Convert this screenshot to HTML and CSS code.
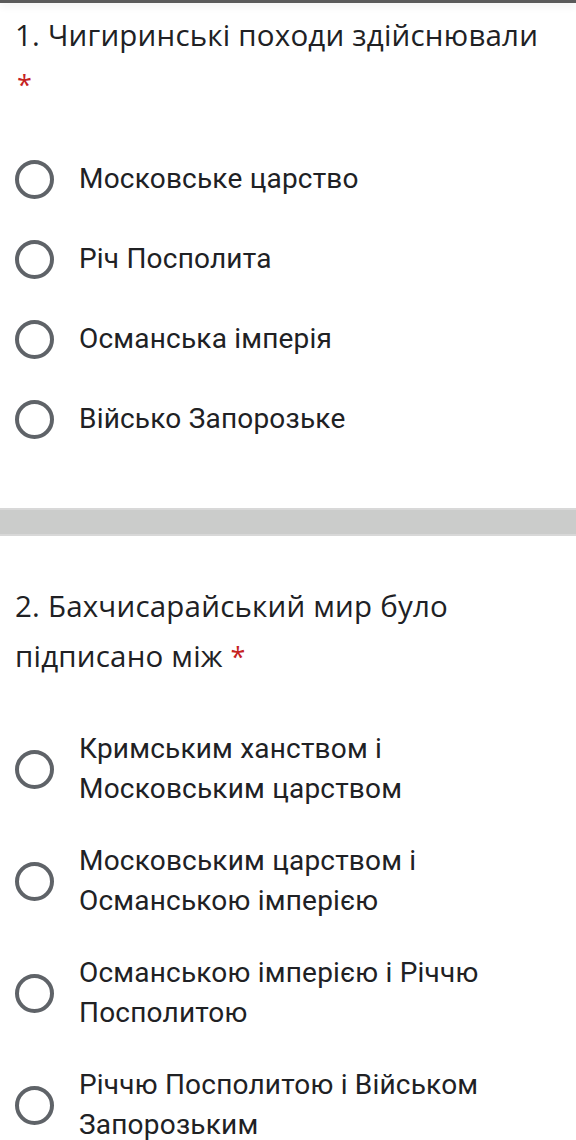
FILE: index.html
```html
<!DOCTYPE html>
<html lang="uk">
<head>
<meta charset="utf-8">
<link rel="stylesheet" href="styles.css">
</head>
<body>
<div class="topbar"></div>
<section class="question q1">
  <h2 class="q-title">1. Чигиринські походи здійснювали <span class="req req-wrap">*</span></h2>
  <ul class="options">
    <li class="option"><span class="radio"></span><span class="label">Московське царство</span></li>
    <li class="option"><span class="radio"></span><span class="label">Річ Посполита</span></li>
    <li class="option"><span class="radio"></span><span class="label">Османська імперія</span></li>
    <li class="option"><span class="radio"></span><span class="label">Військо Запорозьке</span></li>
  </ul>
</section>
<div class="divider"></div>
<section class="question q2">
  <h2 class="q-title">2. Бахчисарайський мир було підписано між <span class="req">*</span></h2>
  <ul class="options tall">
    <li class="option"><span class="radio"></span><span class="label">Кримським ханством і Московським царством</span></li>
    <li class="option"><span class="radio"></span><span class="label">Московським царством і Османською імперією</span></li>
    <li class="option"><span class="radio"></span><span class="label">Османською імперією і Річчю Посполитою</span></li>
    <li class="option"><span class="radio"></span><span class="label">Річчю Посполитою і Військом Запорозьким</span></li>
  </ul>
</section>
</body>
</html>
```

FILE: styles.css
```css
html, body {
  margin: 0;
  padding: 0;
  background: #ffffff;
}
body {
  width: 576px;
  height: 1140px;
  overflow: hidden;
  font-family: Roboto, "Noto Sans", sans-serif;
  color: #202124;
}
.topbar {
  height: 3px;
  background: #5b5b5b;
  box-shadow: 0 2px 8px rgba(0, 0, 0, 0.12);
}
.question {
  padding: 0 15px 0 15px;
}
.q1 {
  padding-top: 7px;
  padding-bottom: 49px;
}
.q2 {
  padding-top: 45px;
}
.q-title {
  margin: 0;
  font-family: "Open Sans", Roboto, sans-serif;
  font-weight: 400;
  font-size: 29.5px;
  line-height: 50px;
  letter-spacing: 0.2px;
  color: #202124;
}
.req {
  color: #c5221f;
  font-size: 27px;
}
.req-wrap {
  display: block;
  padding-left: 2px;
}
.options {
  list-style: none;
  margin: 29px 0 0 0;
  padding: 0;
}
.tall {
  margin-top: 31px;
}
.option {
  display: flex;
  align-items: center;
  gap: 25px;
  height: 80px;
}
.tall .option {
  height: 112px;
}
.tall .label {
  max-width: 430px;
}
.radio {
  flex: none;
  width: 31px;
  height: 31px;
  border: 4px solid #5f6368;
  border-radius: 50%;
}
.label {
  font-size: 28px;
  line-height: 40px;
  color: #202124;
  letter-spacing: 0.2px;
}
.divider {
  height: 24px;
  background: #cbcccb;
  border-top: 2px solid #d8d8d8;
  border-bottom: 2px solid #d8d8d8;
}
```
